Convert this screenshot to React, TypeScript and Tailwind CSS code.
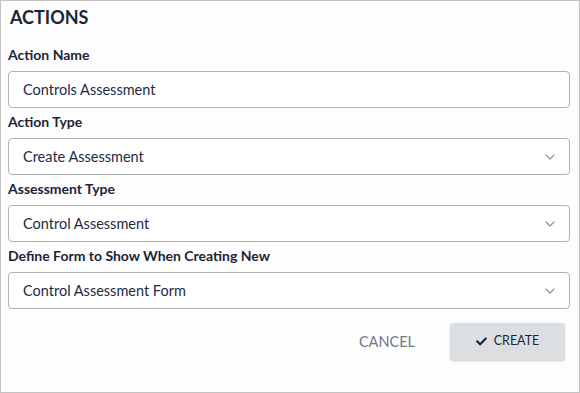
import React from "react";
import { FaCheck } from "react-icons/fa";

interface IField {
    label: string,
    value: string,
    select: boolean
}

const Chevron = () => (
    <svg width="10" height="6" viewBox="0 0 10 6" fill="none">
        <path d="M1 1l4 4 4-4" stroke="#8a93a6" strokeWidth="1.2" strokeLinecap="round" strokeLinejoin="round" />
    </svg>
)

export default function App() {
    const fields: IField[] = [
        { label: "Action Name", value: "Controls Assessment", select: false },
        { label: "Action Type", value: "Create Assessment", select: true },
        { label: "Assessment Type", value: "Control Assessment", select: true },
        { label: "Define Form to Show When Creating New", value: "Control Assessment Form", select: true },
    ]
    return (
        <div className="w-[580px] h-[393px] border border-[#c3c3c3] bg-[#fdfdfd] text-[#1d2a44] font-['Lato','Liberation_Sans',sans-serif] pl-[7px] pr-[9px]">
            <h1 className="text-[18px] font-bold leading-[20px] pt-[6px] pl-[2px] text-[#1b2538]">ACTIONS</h1>
            <div className="flex flex-col mt-[20px]">
                {fields.map((f, i) => (
                    <div key={f.label} className={i === 0 ? "" : "mt-[6px]"}>
                        <div className="text-[14px] font-bold leading-[16px] text-[#1b2538]">{f.label}</div>
                        <div className="mt-[8px] h-[37px] rounded-[4px] border border-[#aeb3ba] bg-white flex items-center justify-between pl-[14px] pr-[14px]">
                            <span className="text-[14.5px]">{f.value}</span>
                            {f.select && <Chevron />}
                        </div>
                    </div>
                ))}
            </div>
            <div className="flex justify-end items-center mt-[14px] pr-[5px]">
                <button className="text-[14.5px] text-[#6f7889] mr-[35px]">CANCEL</button>
                <button className="w-[115px] h-[37px] rounded-[3px] bg-[#dcdfe2] shadow-[0_1px_2px_rgba(0,0,0,0.2)] flex items-center justify-center gap-[7px] text-[12.5px] text-[#1b2538]">
                    <FaCheck size={11} />
                    CREATE
                </button>
            </div>
        </div>
    )
}
